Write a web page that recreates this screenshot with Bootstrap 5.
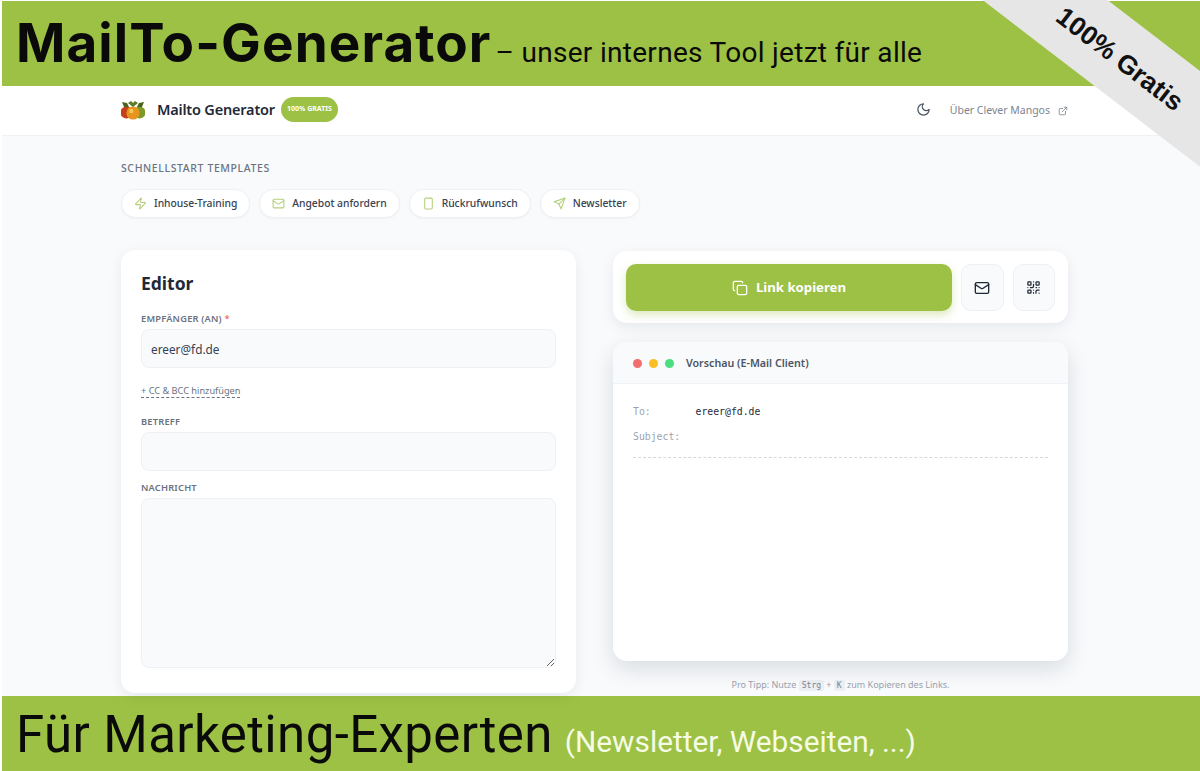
<!DOCTYPE html>
<html lang="de">
<head>
  <meta charset="UTF-8" />
  <meta name="viewport" content="width=device-width, initial-scale=1" />
  <title>MailTo-Generator</title>
  <link href="https://cdn.jsdelivr.net/npm/bootstrap@5.3.3/dist/css/bootstrap.min.css" rel="stylesheet" />
  <style>
    html, body { height: 771px; overflow: hidden; }
    body { background: #fff; font-family: "Noto Sans", sans-serif; color: #1f2937; padding: 1px 0 0 2px; position: relative; }
    svg.ico { fill: none; stroke: currentColor; stroke-width: 2; stroke-linecap: round; stroke-linejoin: round; flex-shrink: 0; }

    .promo-top { height: 85px; background: #9dc144; color: #0a0a0a; padding-left: 14px; }
    .promo-top b { font-family: Inter, sans-serif; font-weight: 700; font-size: 53px; line-height: 85px; letter-spacing: 1.1px; }
    .promo-top span { font-family: Roboto, sans-serif; font-size: 28px; letter-spacing: .3px; margin-left: 4px; }
    .promo-bottom { height: 75px; background: #9dc144; color: #0a0a0a; padding-left: 14px; line-height: 78px; overflow: hidden; font-family: Roboto, sans-serif; font-size: 51px; letter-spacing: .4px; white-space: nowrap; }
    .promo-bottom span { color: #f6fbe6; font-size: 29.8px; letter-spacing: 0; margin-left: -1px; }

    .ribbon { position: absolute; left: 968px; top: 18px; width: 300px; height: 76px; background: #e6e6e6; transform: rotate(37.5deg); }
    .ribbon-text { position: absolute; left: 1042px; top: 49px; width: 156px; height: 20px; transform: rotate(37.5deg); font: 700 26.5px/20px "Liberation Sans", sans-serif; color: #111; text-align: center; white-space: nowrap; }

    .page-wrap { width: 947px; margin-left: 119px; }
    .topbar { height: 50px; background: #fff; border-bottom: 1px solid #eef0f3; padding-bottom: 2px; }
    .brand-name { font-size: 14.5px; font-weight: 600; color: #1f2937; letter-spacing: -.2px; }
    .free-pill { background: #9dc144; color: #fff; font-size: 7px; font-weight: 700; height: 25px; width: 57px; margin-left: 6px; }
    .about-link { font-size: 10.5px; color: #7b8490; text-decoration: none; padding-top: 2px; }
    .moon-btn { color: #4b5563; margin-right: 19px; }

    .main-area { height: 560px; background: #f8fafc; }
    .quick-title { font-size: 10.5px; font-weight: 500; letter-spacing: .6px; color: #6b7280; padding-top: 24px; margin-bottom: 13px; line-height: 16px; }
    .chip-row { gap: 9px; }
    .chip { height: 29px; background: #fff; border: 1px solid #eef0f3; font-size: 10.3px; font-weight: 500; color: #374151; padding: 0 12px; gap: 7px; box-shadow: 0 1px 2px rgba(0,0,0,.04); }
    .chip svg { color: #b5cf7b; }

    .two-cols { display: grid; grid-template-columns: 455px 455px; gap: 37px; margin-top: 32px; align-items: start; }
    .editor-box { height: 443px; border: 0; border-radius: 14px; background: #fff; padding: 20px; box-shadow: 0 4px 14px rgba(15,23,42,.07); }
    .editor-box h2 { font-size: 17.5px; font-weight: 700; color: #1f2937; margin: 1px 0 17px; line-height: 24px; }
    .editor-box .form-label { font-size: 9.3px; font-weight: 600; letter-spacing: .2px; color: #6b7280; margin-bottom: 3px; display: block; line-height: 14px; }
    .editor-box .form-control { background: #f8fafc; border: 1px solid #eef0f3; border-radius: 8px; height: 39px; font-size: 11.8px; color: #374151; padding: 0 9px; box-shadow: none; flex-shrink: 0; }
    .editor-box textarea.form-control { height: 170px; }
    .req { color: #ef6b6b; }
    .cc-link { font-size: 9.2px; color: #6b7280; border-bottom: 1px dashed #6b7280; line-height: 13px; margin: 16px 0 17px; text-decoration: none; }
    .subject-input { margin-bottom: 10px; }

    .action-box { height: 72px; background: #fff; border-radius: 14px; padding: 13px 13px 12px; box-shadow: 0 4px 14px rgba(15,23,42,.08); margin-top: 1px; gap: 9px; }
    .copy-btn { width: 326px; height: 47px; background: #9dc144; border: 0; border-radius: 10px; color: #fff; font-size: 13.2px; font-weight: 700; box-shadow: 0 4px 8px rgba(157,193,68,.35); }
    .copy-btn:hover { background: #9dc144; color: #fff; }
    .side-btn { width: 42.5px; height: 47px; padding: 0; background: #f8fafc; border: 1px solid #eef0f3; border-radius: 10px; color: #1f2937; }

    .preview-box { height: 319px; margin-top: 19px; border: 0; border-radius: 14px; background: #fff; overflow: hidden; box-shadow: 0 8px 22px rgba(15,23,42,.13); }
    .preview-head { height: 42px; background: #f8fafc; border-bottom: 1px solid #f1f3f6; padding: 2px 0 0 20px; font-size: 10.7px; font-weight: 600; color: #4b5563; gap: 7px; }
    .preview-head b { font-weight: 600; margin-left: 5px; }
    .dot { width: 9px; height: 9px; border-radius: 50%; }
    .preview-body { padding: 15px 20px; font-family: "DejaVu Sans Mono", monospace; font-size: 9.8px; line-height: 25px; }
    .mail-key { width: 62.5px; color: #9ca3af; }
    .mail-val { color: #1f2937; }
    .mail-line { border-bottom: 1px dashed #d5d9df; margin-top: 8px; }
    .tip-line { font-size: 9px; color: #9ca3af; text-align: center; margin-top: 17px; line-height: 14px; }
    .tip-line kbd { background: #eceff3; color: #7b8490; font-family: "DejaVu Sans Mono", monospace; font-size: 8px; padding: 1px 3px; border-radius: 2px; box-shadow: none; }
  </style>
</head>
<body>

  <!-- Top banner -->
  <div class="promo-top text-nowrap"><b>MailTo-Generator</b><span>– unser internes Tool jetzt für alle</span></div>

  <!-- App header -->
  <div class="topbar">
    <div class="page-wrap h-100 d-flex align-items-center justify-content-between">
      <div class="d-flex align-items-center">
        <svg width="24" height="20" viewBox="0 0 24 20" class="me-2">
          <circle cx="5.5" cy="12.5" r="6" fill="#c2401a"/>
          <circle cx="18.5" cy="12.5" r="6" fill="#7d9a28"/>
          <circle cx="12" cy="13" r="6.6" fill="#e8951f"/>
          <circle cx="10.3" cy="11" r="2.2" fill="#f6c658"/>
          <path d="M1 2 6 3l2 4H3zM23 2l-5 1-2 4h5z" fill="#4a6420"/>
          <path d="M12 7 7 3l3-2 2 2 2-2 3 2z" fill="#5c7a26"/>
        </svg>
        <span class="brand-name ms-1">Mailto Generator</span>
        <span class="free-pill rounded-pill d-inline-flex align-items-center justify-content-center">100% GRATIS</span>
      </div>
      <div class="d-flex align-items-center">
        <svg class="ico moon-btn" width="15" height="15" viewBox="0 0 24 24"><path d="M12 3a6 6 0 0 0 9 9 9 9 0 1 1-9-9Z"/></svg>
        <a class="about-link d-flex align-items-center gap-2" href="#">Über Clever Mangos
          <svg class="ico" width="10" height="10" viewBox="0 0 24 24"><path d="M15 3h6v6"/><path d="M10 14 21 3"/><path d="M18 13v6a2 2 0 0 1-2 2H5a2 2 0 0 1-2-2V8a2 2 0 0 1 2-2h6"/></svg>
        </a>
      </div>
    </div>
  </div>

  <div class="main-area">
    <div class="page-wrap">
      <div class="quick-title text-uppercase">Schnellstart Templates</div>
      <div class="d-flex chip-row">
        <button class="btn chip rounded-pill d-flex align-items-center">
          <svg class="ico" width="13" height="13" viewBox="0 0 24 24"><path d="M4 14a1 1 0 0 1-.78-1.63l9.9-10.2a.5.5 0 0 1 .86.46l-1.92 6.02A1 1 0 0 0 13 10h7a1 1 0 0 1 .78 1.63l-9.9 10.2a.5.5 0 0 1-.86-.46l1.92-6.02A1 1 0 0 0 11 14z"/></svg>
          Inhouse-Training</button>
        <button class="btn chip rounded-pill d-flex align-items-center">
          <svg class="ico" width="13" height="13" viewBox="0 0 24 24"><rect x="2" y="4" width="20" height="16" rx="2"/><path d="m22 7-8.97 5.7a1.94 1.94 0 0 1-2.06 0L2 7"/></svg>
          Angebot anfordern</button>
        <button class="btn chip rounded-pill d-flex align-items-center">
          <svg class="ico" width="13" height="13" viewBox="0 0 24 24"><rect x="5" y="2" width="14" height="20" rx="2"/></svg>
          Rückrufwunsch</button>
        <button class="btn chip rounded-pill d-flex align-items-center">
          <svg class="ico" width="13" height="13" viewBox="0 0 24 24"><path d="m22 2-7 20-4-9-9-4Z"/><path d="M22 2 11 13"/></svg>
          Newsletter</button>
      </div>

      <div class="two-cols">
        <!-- Editor -->
        <div class="card editor-box">
          <h2>Editor</h2>
          <label class="form-label text-uppercase">Empfänger (An) <span class="req">*</span></label>
          <input class="form-control" type="text" value="ereer@fd.de" />
          <a class="cc-link align-self-start">+ CC &amp; BCC hinzufügen</a>
          <label class="form-label text-uppercase">Betreff</label>
          <input class="form-control subject-input" type="text" />
          <label class="form-label text-uppercase">Nachricht</label>
          <textarea class="form-control"></textarea>
        </div>

        <!-- Actions and preview -->
        <div>
          <div class="action-box d-flex">
            <button class="btn copy-btn flex-shrink-0 d-flex align-items-center justify-content-center gap-2">
              <svg class="ico" width="16" height="16" viewBox="0 0 24 24"><rect x="8" y="8" width="14" height="14" rx="2"/><path d="M4 16c-1.1 0-2-.9-2-2V4c0-1.1.9-2 2-2h10c1.1 0 2 .9 2 2"/></svg>
              Link kopieren</button>
            <button class="btn side-btn flex-shrink-0 d-flex align-items-center justify-content-center">
              <svg class="ico" width="16" height="16" viewBox="0 0 24 24"><rect x="2" y="4" width="20" height="16" rx="2"/><path d="m22 7-8.97 5.7a1.94 1.94 0 0 1-2.06 0L2 7"/></svg>
            </button>
            <button class="btn side-btn flex-shrink-0 d-flex align-items-center justify-content-center">
              <svg class="ico" width="15" height="15" viewBox="0 0 24 24"><rect x="3" y="3" width="5" height="5" rx="1"/><rect x="16" y="3" width="5" height="5" rx="1"/><rect x="3" y="16" width="5" height="5" rx="1"/><path d="M21 16h-3a2 2 0 0 0-2 2v3"/><path d="M21 21v.01"/><path d="M12 7v3a2 2 0 0 1-2 2H7"/><path d="M3 12h.01"/><path d="M12 3h.01"/><path d="M12 16v.01"/><path d="M16 12h1"/><path d="M21 12v.01"/><path d="M12 21v-1"/></svg>
            </button>
          </div>

          <div class="card preview-box">
            <div class="preview-head d-flex flex-row align-items-center">
              <span class="dot" style="background:#f26d6d"></span>
              <span class="dot" style="background:#fbbf24"></span>
              <span class="dot" style="background:#4ade80"></span>
              <b>Vorschau (E-Mail Client)</b>
            </div>
            <div class="preview-body">
              <div class="d-flex"><span class="mail-key">To:</span><span class="mail-val">ereer@fd.de</span></div>
              <div class="d-flex"><span class="mail-key">Subject:</span></div>
              <div class="mail-line"></div>
            </div>
          </div>
          <div class="tip-line">Pro Tipp: Nutze <kbd>Strg</kbd> + <kbd>K</kbd> zum Kopieren des Links.</div>
        </div>
      </div>
    </div>
  </div>

  <!-- Bottom banner -->
  <div class="promo-bottom">Für Marketing-Experten <span>(Newsletter, Webseiten, ...)</span></div>

  <!-- Corner ribbon -->
  <div class="ribbon"></div>
  <div class="ribbon-text">100% Gratis</div>

  <script src="https://cdn.jsdelivr.net/npm/bootstrap@5.3.3/dist/js/bootstrap.bundle.min.js"></script>
</body>
</html>
